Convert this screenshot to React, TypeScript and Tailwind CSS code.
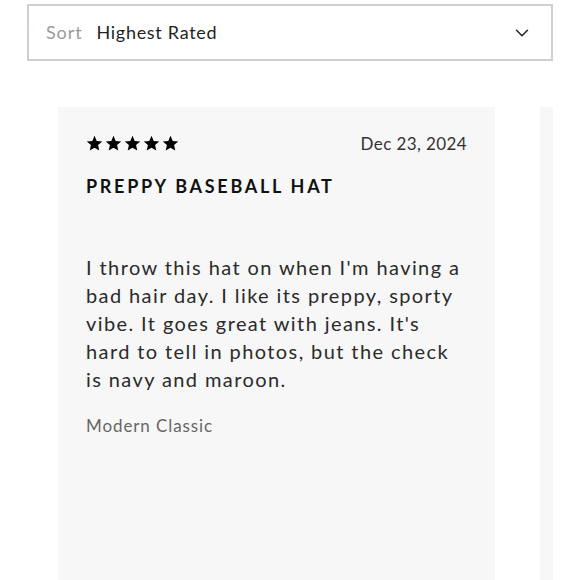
import { ChevronDown } from 'lucide-react';

const reviews = [
  {
    rating: 5,
    date: 'Dec 23, 2024',
    title: 'PREPPY BASEBALL HAT',
    body: "I throw this hat on when I'm having a bad hair day. I like its preppy, sporty vibe. It goes great with jeans. It's hard to tell in photos, but the check is navy and maroon.",
    product: 'Modern Classic',
  },
  {
    rating: 5,
    date: 'Dec 20, 2024',
    title: 'LOVE IT',
    body: 'Great fit and quality.',
    product: 'Modern Classic',
  },
];

function Star() {
  return (
    <svg width="17" height="17" viewBox="0 0 24 24" className="fill-black">
      <path d="M12 1.2l3.12 7.2 7.8.7-5.9 5.16 1.76 7.64L12 17.85l-6.78 4.05 1.76-7.64-5.9-5.16 7.8-.7z" />
    </svg>
  );
}

function App() {
  return (
    <div className="w-[580px] h-[580px] overflow-hidden bg-white font-['Lato',sans-serif]">
      <div className="w-[526px] ml-[27px] pt-[4px]">
        {/* Sort dropdown */}
        <div className="h-[57px] border-2 border-[#cfcfcf] flex items-center pl-[17px] pr-[18px]">
          <span className="text-[18px] text-[#9a9a9a] tracking-[0.9px]">Sort</span>
          <span className="text-[18px] text-[#1f1f1f] ml-[14px] tracking-[0.7px]">Highest Rated</span>
          <ChevronDown className="ml-auto text-[#222]" size={22} strokeWidth={1.6} />
        </div>

        {/* Review cards - horizontal carousel, next card peeks in on the right */}
        <div className="flex gap-[45px] pl-[31px] mt-[46px] overflow-hidden">
          {reviews.map((r, i) => (
            <div key={i} className="shrink-0 w-[437px] h-[480px] bg-[#f7f7f7] px-[28px] pt-[24px]">
              <div className="flex items-center justify-between">
                <div className="flex gap-[2px]">
                  {Array.from({ length: r.rating }).map((_, j) => (
                    <Star key={j} />
                  ))}
                </div>
                <span className="text-[17px] text-[#333] tracking-[0.4px]">{r.date}</span>
              </div>
              <h3 className="mt-[16px] text-[18px] font-bold tracking-[2.7px] text-[#111]">{r.title}</h3>
              <p className="mt-[53px] w-[377px] text-[20px] leading-[28px] text-[#2b2b2b] tracking-[1.4px]">{r.body}</p>
              <p className="mt-[20px] text-[17px] text-[#666] tracking-[0.9px]">{r.product}</p>
            </div>
          ))}
        </div>
      </div>
    </div>
  );
}

export default App;
